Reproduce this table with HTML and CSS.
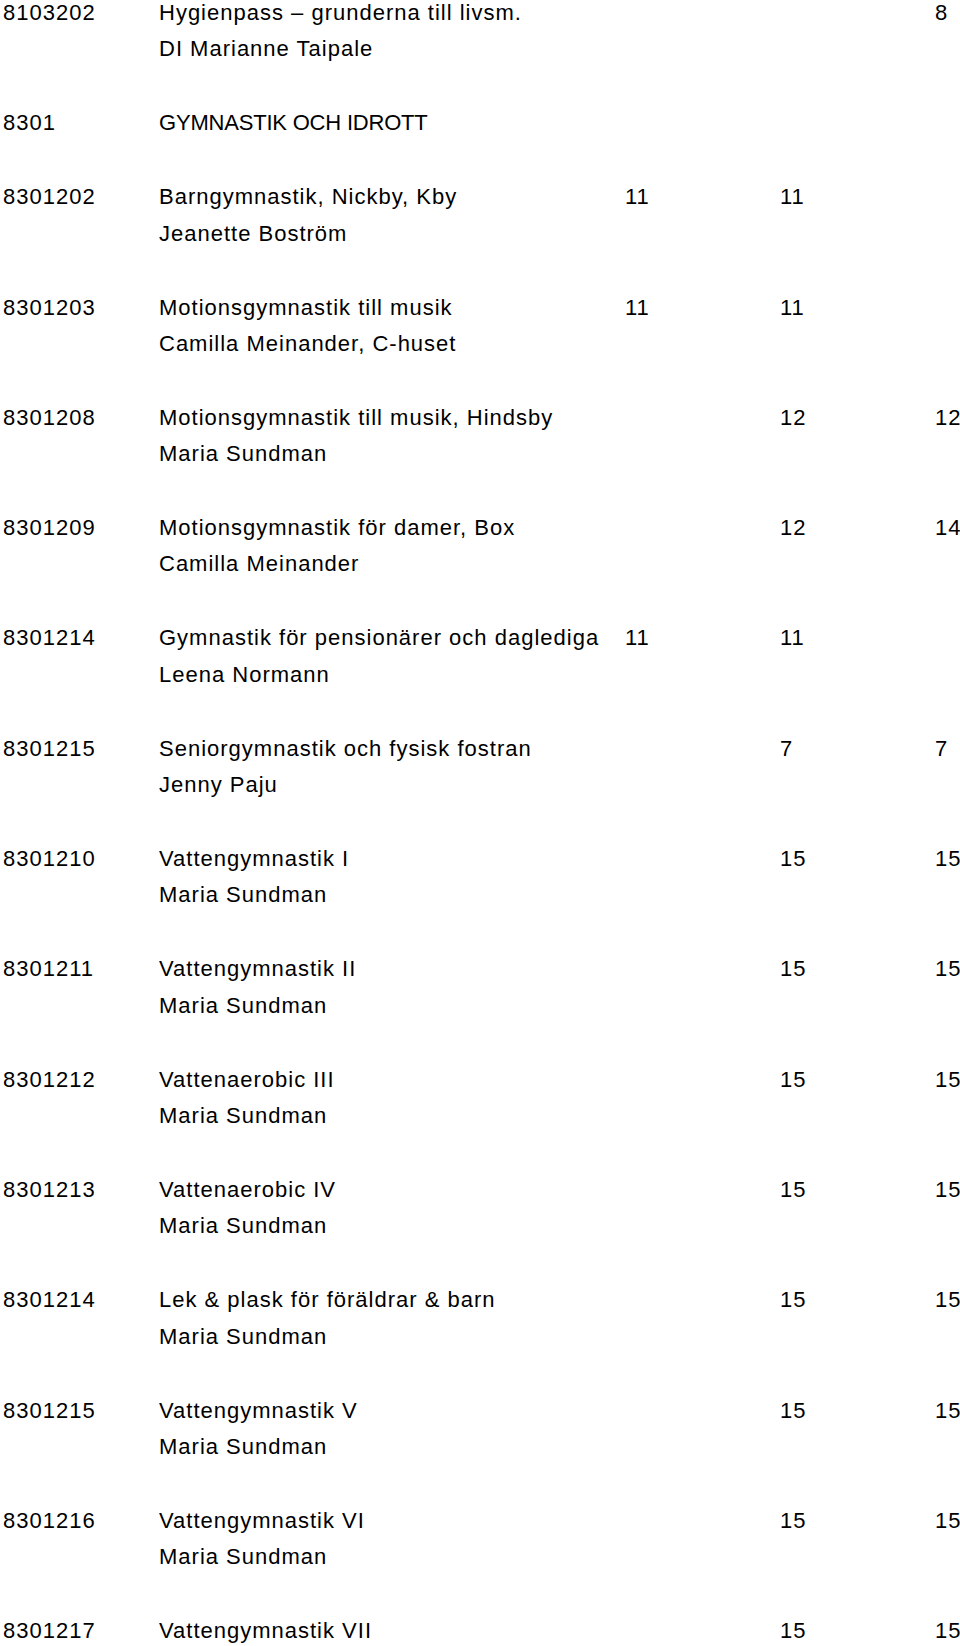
FILE: index.html
```html
<!DOCTYPE html>
<html lang="sv">
<head>
<meta charset="utf-8">
<title>Kurser – Gymnastik och idrott</title>
<link rel="stylesheet" href="styles.css">
</head>
<body>
<main class="list">
  <div class="course">
    <span class="code">8103202</span>
    <span class="title">Hygienpass – grunderna till livsm.</span>
    <span class="n n3">8</span>
    <span class="teacher">DI Marianne Taipale</span>
  </div>
  <div class="course">
    <span class="code">8301</span>
    <span class="title section">GYMNASTIK OCH IDROTT</span>
  </div>
  <div class="course">
    <span class="code">8301202</span>
    <span class="title">Barngymnastik, Nickby, Kby</span>
    <span class="n n1">11</span>
    <span class="n n2">11</span>
    <span class="teacher">Jeanette Boström</span>
  </div>
  <div class="course">
    <span class="code">8301203</span>
    <span class="title">Motionsgymnastik till musik</span>
    <span class="n n1">11</span>
    <span class="n n2">11</span>
    <span class="teacher">Camilla Meinander, C-huset</span>
  </div>
  <div class="course">
    <span class="code">8301208</span>
    <span class="title">Motionsgymnastik till musik, Hindsby</span>
    <span class="n n2">12</span>
    <span class="n n3">12</span>
    <span class="teacher">Maria Sundman</span>
  </div>
  <div class="course">
    <span class="code">8301209</span>
    <span class="title">Motionsgymnastik för damer, Box</span>
    <span class="n n2">12</span>
    <span class="n n3">14</span>
    <span class="teacher">Camilla Meinander</span>
  </div>
  <div class="course">
    <span class="code">8301214</span>
    <span class="title">Gymnastik för pensionärer och daglediga</span>
    <span class="n n1">11</span>
    <span class="n n2">11</span>
    <span class="teacher">Leena Normann</span>
  </div>
  <div class="course">
    <span class="code">8301215</span>
    <span class="title">Seniorgymnastik och fysisk fostran</span>
    <span class="n n2">7</span>
    <span class="n n3">7</span>
    <span class="teacher">Jenny Paju</span>
  </div>
  <div class="course">
    <span class="code">8301210</span>
    <span class="title">Vattengymnastik I</span>
    <span class="n n2">15</span>
    <span class="n n3">15</span>
    <span class="teacher">Maria Sundman</span>
  </div>
  <div class="course">
    <span class="code">8301211</span>
    <span class="title">Vattengymnastik II</span>
    <span class="n n2">15</span>
    <span class="n n3">15</span>
    <span class="teacher">Maria Sundman</span>
  </div>
  <div class="course">
    <span class="code">8301212</span>
    <span class="title">Vattenaerobic III</span>
    <span class="n n2">15</span>
    <span class="n n3">15</span>
    <span class="teacher">Maria Sundman</span>
  </div>
  <div class="course">
    <span class="code">8301213</span>
    <span class="title">Vattenaerobic IV</span>
    <span class="n n2">15</span>
    <span class="n n3">15</span>
    <span class="teacher">Maria Sundman</span>
  </div>
  <div class="course">
    <span class="code">8301214</span>
    <span class="title">Lek &amp; plask för föräldrar &amp; barn</span>
    <span class="n n2">15</span>
    <span class="n n3">15</span>
    <span class="teacher">Maria Sundman</span>
  </div>
  <div class="course">
    <span class="code">8301215</span>
    <span class="title">Vattengymnastik V</span>
    <span class="n n2">15</span>
    <span class="n n3">15</span>
    <span class="teacher">Maria Sundman</span>
  </div>
  <div class="course">
    <span class="code">8301216</span>
    <span class="title">Vattengymnastik VI</span>
    <span class="n n2">15</span>
    <span class="n n3">15</span>
    <span class="teacher">Maria Sundman</span>
  </div>
  <div class="course">
    <span class="code">8301217</span>
    <span class="title">Vattengymnastik VII</span>
    <span class="n n2">15</span>
    <span class="n n3">15</span>
  </div>
</main>
</body>
</html>
```

FILE: styles.css
```css
html, body {
  margin: 0;
  padding: 0;
  background: #ffffff;
}

body {
  font-family: "Liberation Sans", Arial, Helvetica, sans-serif;
  font-size: 22px;
  color: #000000;
  letter-spacing: 1px;
  overflow: hidden;
}

.list {
  display: flex;
  flex-direction: column;
  gap: 48px;
  padding-left: 3px;
}

.course {
  display: grid;
  grid-template-columns: 156px 466px 155px 155px 1fr;
  row-gap: 10.3px;
  line-height: 26px;
  white-space: nowrap;
}

.code { grid-column: 1; grid-row: 1; }
.title { grid-column: 2; grid-row: 1; }
.section { letter-spacing: -0.2px; }
.n1 { grid-column: 3; grid-row: 1; }
.n2 { grid-column: 4; grid-row: 1; }
.n3 { grid-column: 5; grid-row: 1; }
.teacher { grid-column: 2 / span 4; grid-row: 2; }
```
